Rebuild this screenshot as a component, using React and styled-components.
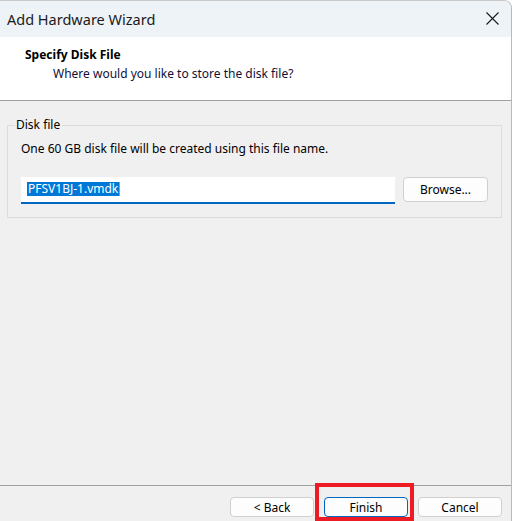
import React from "react";
import styled, { createGlobalStyle } from "styled-components";

const GlobalStyle = createGlobalStyle`
  html, body {
    margin: 0;
    padding: 0;
    background: #ffffff;
  }
  body {
    font-family: "Noto Sans", "Liberation Sans", sans-serif;
    font-size: 12px;
    color: #000;
  }
`;

function CloseIcon() {
  return (
    <svg width="13" height="13" viewBox="0 0 13 13">
      <path d="M0.5 0.5 L12.5 12.5 M12.5 0.5 L0.5 12.5" stroke="#1a1a1a" strokeWidth="1.1" fill="none" />
    </svg>
  );
}

function App() {
  return (
    <>
      <GlobalStyle />
      <Window>
        <TitleBar>
          <TitleText>Add Hardware Wizard</TitleText>
          <CloseButton>
            <CloseIcon />
          </CloseButton>
        </TitleBar>

        <Header>
          <HeaderTitle>Specify Disk File</HeaderTitle>
          <HeaderSub>Where would you like to store the disk file?</HeaderSub>
        </Header>

        <Body>
          <Group>
            <Legend>Disk file</Legend>
            <Description>One 60 GB disk file will be created using this file name.</Description>
            <FileRow>
              <TextField>
                <Selected>PFSV1BJ-1.vmdk</Selected>
                <Caret />
              </TextField>
              <Button $width={85} $height={25}>Browse...</Button>
            </FileRow>
          </Group>
        </Body>

        <Footer>
          <Button>&lt; Back</Button>
          <Highlight>
            <Button $primary>Finish</Button>
            <RedBox />
          </Highlight>
          <Button>Cancel</Button>
        </Footer>
      </Window>
    </>
  );
}

const Window = styled.div`
  width: 511px;
  height: 520px;
  display: flex;
  flex-direction: column;
  border-top: 1px solid #c9c9c9;
  border-right: 1px solid #b9b9b9;
  border-radius: 0 8px 0 0;
  overflow: hidden;
  background: #f0f0f0;
`;

const TitleBar = styled.div`
  height: 36px;
  flex-shrink: 0;
  display: flex;
  align-items: center;
  justify-content: space-between;
  padding: 0 12px 0 7px;
  background: #eef3f8;
`;

const TitleText = styled.div`
  font-size: 14.5px;
  color: #1b1b1b;
  padding-bottom: 1px;
`;

const CloseButton = styled.div`
  display: flex;
  align-items: center;
  padding-bottom: 1px;
`;

const Header = styled.div`
  height: 64px;
  flex-shrink: 0;
  box-sizing: border-box;
  padding: 10px 0 0 25px;
  background: #ffffff;
  border-bottom: 1px solid #a0a0a0;
`;

const HeaderTitle = styled.div`
  font-weight: 700;
  line-height: 16px;
`;

const HeaderSub = styled.div`
  margin: 3px 0 0 28px;
  line-height: 16px;
  color: #101038;
`;

const Body = styled.div`
  flex: 1;
  padding: 16px 9px 0 7px;
  background: #f0f0f0;
`;

const Group = styled.fieldset`
  margin: 0;
  padding: 8px 13px 13px;
  border: 1px solid #dcdcdc;
  min-width: 0;
`;

const Legend = styled.legend`
  margin-left: -6px;
  padding: 0 2px 0 1px;
  line-height: 16px;
`;

const Description = styled.div`
  line-height: 16px;
`;

const FileRow = styled.div`
  display: flex;
  align-items: flex-start;
  gap: 8px;
  margin-top: 20px;
`;

const TextField = styled.div`
  width: 374px;
  height: 27px;
  box-sizing: border-box;
  display: flex;
  align-items: center;
  padding: 0 0 1px 6px;
  background: #ffffff;
  border-bottom: 2px solid #0067c0;
`;

const Selected = styled.span`
  background: #0078d7;
  color: #ffffff;
  line-height: 14px;
  height: 14px;
  padding: 0 1px 0 1px;
`;

const Caret = styled.span`
  width: 1px;
  height: 14px;
  background: #f0892a;
`;

const Button = styled.div`
  width: ${(p) => p.$width || 84}px;
  height: ${(p) => p.$height || 20}px;
  box-sizing: border-box;
  display: flex;
  align-items: center;
  justify-content: center;
  background: #fdfdfd;
  border: 1px solid ${(p) => (p.$primary ? "#0067c0" : "#d0d0d0")};
  border-radius: 4px;
  color: #000;
`;

const Footer = styled.div`
  height: 24px;
  flex-shrink: 0;
  display: flex;
  justify-content: flex-end;
  align-items: flex-start;
  gap: 10px;
  padding: 11px 9px 0 0;
  border-top: 1px solid #a0a0a0;
  background: #f0f0f0;
`;

const Highlight = styled.div`
  position: relative;
`;

const RedBox = styled.div`
  position: absolute;
  left: -9px;
  right: -6px;
  top: -14px;
  bottom: -4px;
  border: 4px solid #ed1c24;
  pointer-events: none;
`;

export default App;
